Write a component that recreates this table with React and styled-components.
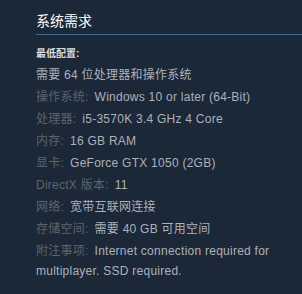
import styled, { createGlobalStyle } from 'styled-components';

const GlobalStyle = createGlobalStyle`
  html, body {
    margin: 0;
    padding: 0;
    background: #1b2838;
  }
`;

const Page = styled.div`
  width: 302px;
  height: 294px;
  background: #1b2838;
  padding: 12px 0 0 36px;
  box-sizing: border-box;
  font-family: "Liberation Sans", Arial, "Noto Sans CJK SC", sans-serif;
  overflow: hidden;
`;

const Heading = styled.h2`
  margin: 0;
  padding-bottom: 4px;
  font-size: 14px;
  font-weight: normal;
  line-height: 18px;
  color: #ffffff;
  border-bottom: 1px solid #3d6c8d;
`;

const Section = styled.div`
  padding-top: 12px;
`;

const Title = styled.div`
  font-size: 10px;
  font-weight: bold;
  line-height: 14px;
  color: #dcdedf;
  margin-bottom: 4px;
`;

const List = styled.ul`
  list-style: none;
  margin: 0;
  padding: 0 8px 0 0;
`;

const Item = styled.li`
  font-size: 12px;
  letter-spacing: 0.25px;
  line-height: 20px;
  color: #acb2b8;
  margin-bottom: 2px;
`;

const Label = styled.span`
  color: #5f646b;
  margin-right: 6px;
`;

const specs = [
  { label: '操作系统:', value: 'Windows 10 or later (64-Bit)' },
  { label: '处理器:', value: 'i5-3570K 3.4 GHz 4 Core' },
  { label: '内存:', value: '16 GB RAM' },
  { label: '显卡:', value: 'GeForce GTX 1050 (2GB)' },
  { label: 'DirectX 版本:', value: '11' },
  { label: '网络:', value: '宽带互联网连接' },
  { label: '存储空间:', value: '需要 40 GB 可用空间' },
  { label: '附注事项:', value: 'Internet connection required for multiplayer. SSD required.' },
];

export default function App() {
  return (
    <>
      <GlobalStyle />
      <Page>
        <Heading>系统需求</Heading>
        <Section>
          <Title>最低配置:</Title>
          <List>
            <Item>需要 64 位处理器和操作系统</Item>
            {specs.map((s) => (
              <Item key={s.label}>
                <Label>{s.label}</Label>{s.value}
              </Item>
            ))}
          </List>
        </Section>
      </Page>
    </>
  );
}
